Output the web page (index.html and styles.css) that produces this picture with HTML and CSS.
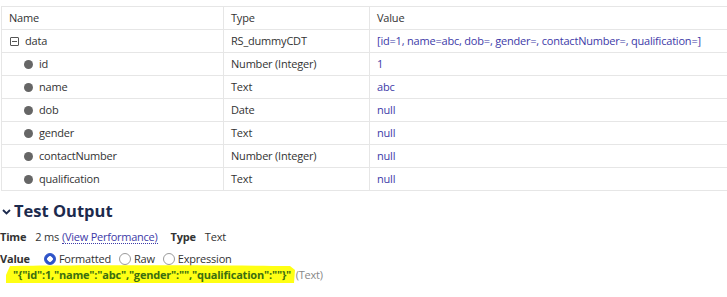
FILE: index.html
```html
<!DOCTYPE html>
<html>
<head>
<meta charset="utf-8">
<link rel="stylesheet" href="styles.css">
</head>
<body>
<div class="page">
  <table class="grid">
    <colgroup><col class="c1"><col class="c2"><col class="c3"></colgroup>
    <tr><td>Name</td><td>Type</td><td>Value</td></tr>
    <tr><td><span class="toggle"></span>data</td><td>RS_dummyCDT</td><td class="val">[id=1, name=abc, dob=, gender=, contactNumber=, qualification=]</td></tr>
    <tr><td class="child"><span class="dot"></span>id</td><td>Number (Integer)</td><td class="val">1</td></tr>
    <tr><td class="child"><span class="dot"></span>name</td><td>Text</td><td class="val">abc</td></tr>
    <tr><td class="child"><span class="dot"></span>dob</td><td>Date</td><td class="val">null</td></tr>
    <tr><td class="child"><span class="dot"></span>gender</td><td>Text</td><td class="val">null</td></tr>
    <tr><td class="child"><span class="dot"></span>contactNumber</td><td>Number (Integer)</td><td class="val">null</td></tr>
    <tr><td class="child"><span class="dot"></span>qualification</td><td>Text</td><td class="val">null</td></tr>
  </table>

  <h2 class="section-title">
    <svg class="chev" width="9" height="6" viewBox="0 0 9 6"><path d="M1 1 L4.5 4.5 L8 1" fill="none" stroke="#1c2a4d" stroke-width="1.8"/></svg>
    Test Output
  </h2>

  <div class="meta">
    <span class="key">Time</span><span class="v">2 ms</span><a class="link">(View Performance)</a>
    <span class="key key2">Type</span><span class="v">Text</span>
  </div>

  <div class="meta value-row">
    <span class="key">Value</span>
    <span class="radio on"></span><span class="rlabel">Formatted</span>
    <span class="radio"></span><span class="rlabel">Raw</span>
    <span class="radio"></span><span class="rlabel">Expression</span>
  </div>

  <div class="result">
    <svg class="marker" width="300" height="34" viewBox="0 0 300 34">
      <path d="M9 1 C60 0 200 0 289 1 L294 5 L293 18 C290 24 286 26 282 28 C230 29 140 30 60 29 C35 28 15 25 5 22 L5 10 Z" fill="#ffff14"/>
    </svg>
    <span class="json">"{"id":1,"name":"abc","gender":"","qualification":""}"</span>
    <span class="type">(Text)</span>
  </div>
</div>
</body>
</html>
```

FILE: styles.css
```css
html, body {
  margin: 0;
  padding: 0;
  background: #ffffff;
}
body {
  font-family: "Open Sans", "Noto Sans", sans-serif;
  font-size: 11px;
  letter-spacing: -0.2px;
  color: #333333;
}
.page {
  padding-top: 6px;
  padding-left: 1px;
}
.grid {
  border-collapse: collapse;
  width: 726px;
  table-layout: fixed;
}
.c1 { width: 222px; }
.c2 { width: 146px; }
.grid td {
  height: 22px;
  padding: 0 7px;
  border: 1px solid #e6e6e6;
  border-right: none;
  vertical-align: middle;
  white-space: nowrap;
  line-height: 16px;
}
.grid td.val { color: #3d3aa8; }
.toggle {
  display: inline-block;
  width: 7px;
  height: 7px;
  border: 1px solid #555;
  border-radius: 1px;
  position: relative;
  vertical-align: -1px;
  margin-left: 1px;
  margin-right: 6px;
}
.toggle::after {
  content: "";
  position: absolute;
  left: 1px;
  right: 1px;
  top: 3px;
  height: 1px;
  background: #555;
}
.grid td.child { padding-left: 22px; }
.dot {
  display: inline-block;
  width: 9px;
  height: 9px;
  border-radius: 50%;
  background: #666666;
  margin-right: 6px;
  vertical-align: -1px;
}
.section-title {
  margin: 8px 0 0 0;
  font-size: 16.5px;
  letter-spacing: 0;
  font-weight: 700;
  color: #1c2a4d;
  line-height: 24px;
  display: flex;
  align-items: center;
  gap: 3px;
}
.chev { margin-left: 1px; margin-top: 2px; }
.meta {
  display: flex;
  align-items: center;
  margin-top: 5px;
  line-height: 18px;
  color: #333;
}
.key { font-weight: 700; color: #333; margin-left: -1px; }
.v { margin-left: 9px; }
.link {
  color: #3d3aa8;
  margin-left: 3px;
  border-bottom: 1px dotted #3d3aa8;
  line-height: 13px;
  letter-spacing: -0.25px;
}
.key2 { margin-left: 13px; }
.value-row { margin-top: 4px; }
.radio {
  display: inline-block;
  width: 10px;
  height: 10px;
  border: 1px solid #9a9a9a;
  border-radius: 50%;
  margin-left: 8px;
  margin-right: 3px;
}
.value-row .key + .radio { margin-left: 14px; }
.radio.on {
  border-color: #2f54c9;
  background: radial-gradient(circle, #ffffff 0 2.5px, #2f54c9 3px);
}
.rlabel { color: #333; }
.result {
  position: relative;
  padding-left: 12px;
  line-height: 16px;
  margin-top: -1px;
}
.marker {
  position: absolute;
  left: 0;
  top: -2px;
}
.json {
  position: relative;
  font-weight: 700;
  color: #3b6e10;
}
.type {
  position: relative;
  color: #888;
  margin-left: 2px;
}
```
